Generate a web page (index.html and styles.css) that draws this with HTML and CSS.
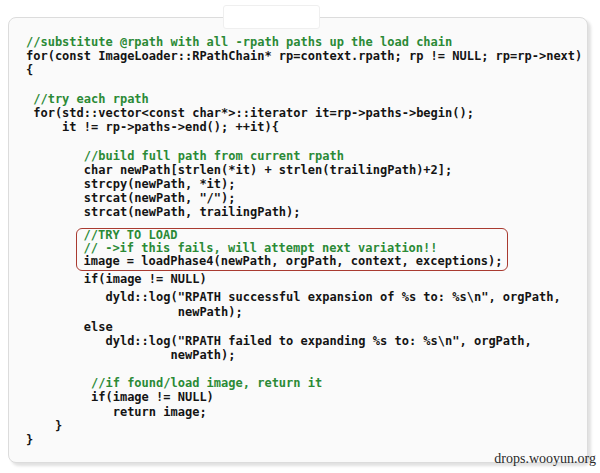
FILE: index.html
```html
<!DOCTYPE html>
<html>
<head>
<meta charset="utf-8">
<link rel="stylesheet" href="styles.css">
</head>
<body>
<div class="page">
  <div class="patch"></div>
  <div class="card">
    <div class="code">
      <div class="ln c">//substitute @rpath with all -rpath paths up the load chain</div>
      <div class="ln">for(const ImageLoader::RPathChain* rp=context.rpath; rp != NULL; rp=rp-&gt;next)</div>
      <div class="ln">{</div>
      <div class="ln"> </div>
      <div class="ln c"> //try each rpath</div>
      <div class="ln"> for(std::vector&lt;const char*&gt;::iterator it=rp-&gt;paths-&gt;begin();</div>
      <div class="ln">     it != rp-&gt;paths-&gt;end(); ++it){</div>
      <div class="ln"> </div>
      <div class="ln c">        //build full path from current rpath</div>
      <div class="ln">        char newPath[strlen(*it) + strlen(trailingPath)+2];</div>
      <div class="ln">        strcpy(newPath, *it);</div>
      <div class="ln">        strcat(newPath, "/");</div>
      <div class="ln">        strcat(newPath, trailingPath);</div>
      <div class="box">
        <div class="ln c">//TRY TO LOAD</div>
        <div class="ln c">// -&gt;if this fails, will attempt next variation!!</div>
        <div class="ln">image = loadPhase4(newPath, orgPath, context, exceptions);</div>
      </div>
      <div class="ln after">        if(image != NULL)</div>
      <div class="ln gap">           dyld::log("RPATH successful expansion of %s to: %s\n", orgPath,</div>
      <div class="ln">                     newPath);</div>
      <div class="ln">        else</div>
      <div class="ln">           dyld::log("RPATH failed to expanding %s to: %s\n", orgPath,</div>
      <div class="ln">                    newPath);</div>
      <div class="ln"> </div>
      <div class="ln c">         //if found/load image, return it</div>
      <div class="ln">         if(image != NULL)</div>
      <div class="ln">            return image;</div>
      <div class="ln">    }</div>
      <div class="ln">}</div>
    </div>
  </div>
  <div class="mark">drops.wooyun.org</div>
</div>
</body>
</html>
```
FILE: styles.css
```css
html, body {
  margin: 0;
  padding: 0;
  background: #ffffff;
}
.page {
  position: relative;
  width: 600px;
  height: 473px;
  padding: 17px 0 0 8px;
  box-sizing: border-box;
}
.card {
  width: 580px;
  height: 446px;
  box-sizing: border-box;
  background: #fafafa;
  border: 1px solid #dcdcdc;
  border-radius: 8px;
  box-shadow: 3px 3px 3px rgba(0, 0, 0, 0.12);
  padding: 17px 0 0 17px;
}
.patch {
  position: absolute;
  left: 223px;
  top: 5px;
  width: 95px;
  height: 22px;
  background: #ffffff;
  border: 1px solid #efefef;
  border-radius: 3px;
  z-index: 2;
}
.code {
  font-family: "DejaVu Sans Mono", "Liberation Mono", monospace;
  font-weight: bold;
  font-size: 12px;
  line-height: 14.2px;
  color: #141414;
}
.ln {
  white-space: pre;
  height: 14.2px;
}
.c {
  color: #2b8a36;
}
.box {
  width: 432px;
  box-sizing: border-box;
  margin: 8.5px 0 0 49.5px;
  padding: 0 0 1.5px 7px;
  border: 1.5px solid #a93a30;
  border-radius: 6px;
  line-height: 13.2px;
}
.box .ln {
  height: 13.2px;
}
.after {
  margin-top: 1px;
}
.gap {
  margin-top: 4.2px;
  margin-bottom: 0.8px;
}
.mark {
  position: absolute;
  right: 4px;
  top: 451px;
  font-family: "Liberation Serif", "DejaVu Serif", serif;
  font-size: 14px;
  color: #2a2a2a;
  line-height: 16px;
}
```
